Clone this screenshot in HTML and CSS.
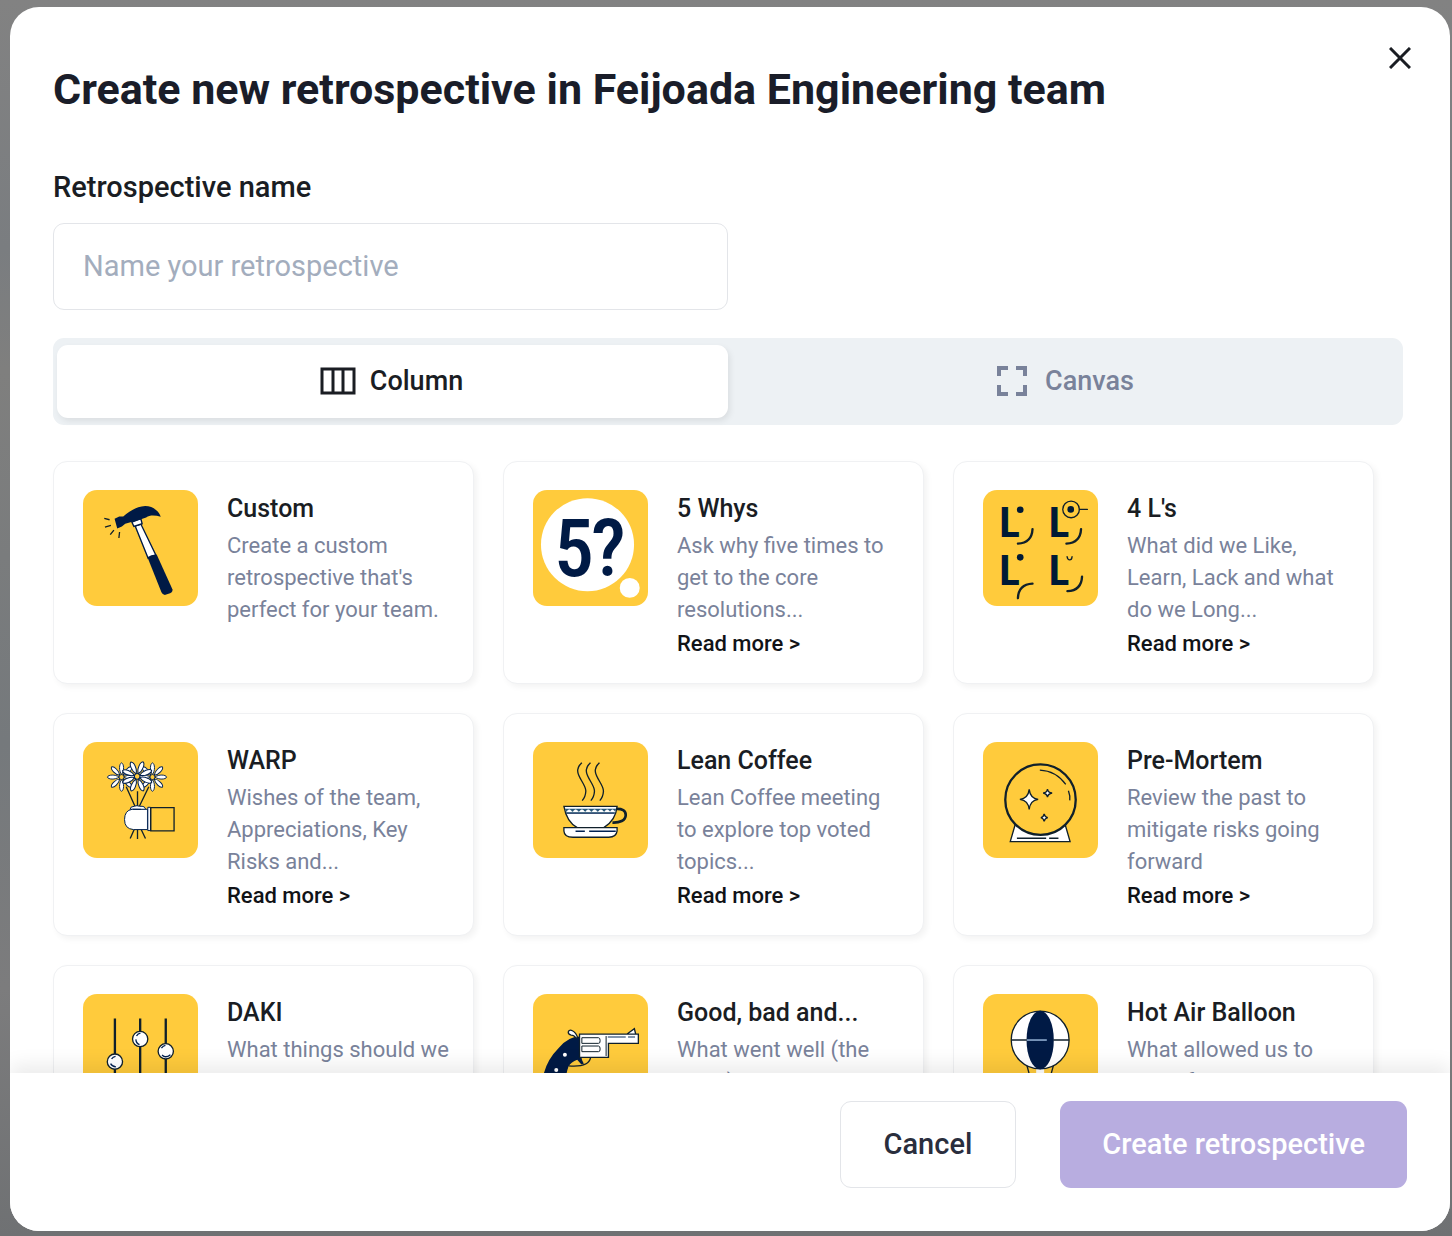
FILE: index.html
```html
<!DOCTYPE html>
<html lang="en">
<head>
  <meta charset="UTF-8">
  <meta name="viewport" content="width=device-width, initial-scale=1.0">
  <title>Create new retrospective</title>
  <link rel="stylesheet" href="styles.css">
</head>
<body>
  <div class="modal" role="dialog" aria-labelledby="modalTitle">
    <button class="close-btn" type="button" aria-label="Close">
      <svg width="22" height="22" viewBox="0 0 22 22"><path d="M1 1l20 20M21 1L1 21" fill="none" stroke="currentColor" stroke-width="3"/></svg>
    </button>

    <div class="modal-body">
      <h1 id="modalTitle">Create new retrospective in Feijoada Engineering team</h1>

      <div class="form-group">
        <label for="retroName">Retrospective name</label>
        <input type="text" id="retroName" placeholder="Name your retrospective">
      </div>

      <div class="tabs">
        <button type="button" class="tab active">
          <svg width="36" height="28" viewBox="0 0 36 28" fill="none" stroke="currentColor" stroke-width="3"><rect x="2" y="2" width="32" height="24"/><path d="M13 2v24M23 2v24"/></svg>
          Column
        </button>
        <button type="button" class="tab">
          <svg width="36" height="30" viewBox="0 0 36 30" fill="none" stroke="currentColor" stroke-width="4"><path d="M4 10V2h9M21 2h9v8M30 19v9h-9M13 28H4v-9"/></svg>
          Canvas
        </button>
      </div>

      <div class="templates">
        <article class="card">
          <svg class="thumb" viewBox="24 24 346 348">
            <path d="M181 132L198 126 243 219 220 229z" fill="#fff" stroke="#001a45" stroke-width="4"/>
            <path d="M171 120l27-10 4 15-25 8z" fill="#fff" stroke="#001a45" stroke-width="4"/>
            <path d="M119 110l14-7 12 0c18-14 38-30 66-31 24 0 42 16 47 32-16-4-32-6-44 2-20 8-42 13-63 19l-10 8-14 6z" fill="#001a45"/>
            <path d="M218 226q12-9 28-8l47 104q2 8-7 12l-14 5q-8 1-12-8z" fill="#001a45"/>
            <path d="M88 109l16 4M90 135l18-5M106 158l11-14M132 168l2-18" fill="none" stroke="#10202b" stroke-width="4"/>
          </svg>
          <div class="card-text">
            <h3>Custom</h3>
            <p>Create a custom retrospective that's perfect for your team.</p>
          </div>
        </article>

        <article class="card">
          <svg class="thumb" viewBox="24 24 346 348">
            <circle cx="188" cy="188" r="140" fill="#fff"/>
            <circle cx="315" cy="318" r="30" fill="#fff"/>
            <g class="thumb-num">
              <text x="147" y="283">5</text>
              <text x="251" y="283">?</text>
            </g>
          </svg>
          <div class="card-text">
            <h3>5 Whys</h3>
            <p>Ask why five times to get to the core resolutions...</p>
            <a href="#">Read more &gt;</a>
          </div>
        </article>

        <article class="card">
          <svg class="thumb" viewBox="24 24 346 348">
            <g class="thumb-letters">
              <text x="73" y="165">L</text>
              <text x="222" y="165">L</text>
              <text x="73" y="308">L</text>
              <text x="222" y="308">L</text>
            </g>
            <g fill="#001a35">
              <circle cx="136" cy="83" r="10"/>
              <circle cx="288" cy="82" r="10"/>
              <circle cx="136" cy="226" r="10"/>
            </g>
            <g fill="none" stroke="#10202b" stroke-width="7" stroke-linecap="round">
              <path d="M173 141q-2 42-44 44M319 141q-2 42-44 44M322 284q-2 42-44 44M173 305q-42 2-44 44"/>
              <path d="M277 224c2 13 14 13 15 0" stroke-width="4"/>
              <path d="M314 82h24" stroke-width="4"/>
              <circle cx="289" cy="82" r="25" stroke-width="4"/>
            </g>
          </svg>
          <div class="card-text">
            <h3>4 L's</h3>
            <p>What did we Like, Learn, Lack and what do we Long...</p>
            <a href="#">Read more &gt;</a>
          </div>
        </article>

        <article class="card">
          <svg class="thumb" viewBox="24 24 346 348">
            <defs>
              <path id="petal" d="M0-8C-9-20-8-42 0-45 8-42 9-20 0-8z"/>
              <g id="flower">
                <use href="#petal"/><use href="#petal" transform="rotate(45)"/><use href="#petal" transform="rotate(90)"/>
                <use href="#petal" transform="rotate(135)"/><use href="#petal" transform="rotate(180)"/><use href="#petal" transform="rotate(225)"/>
                <use href="#petal" transform="rotate(270)"/><use href="#petal" transform="rotate(315)"/>
                <circle r="8" fill="#ffcb3c"/>
              </g>
            </defs>
            <path d="M154 158l26 58M188 172v46M222 158l-28 58M178 287l-12 27M188 287v28M199 287l13 27" fill="none" stroke="#10202b" stroke-width="4"/>
            <g fill="#fff" stroke="#002050" stroke-width="3">
              <use href="#flower" transform="translate(140 129) scale(.95)"/>
              <use href="#flower" transform="translate(233 129) scale(.95)"/>
              <use href="#flower" transform="translate(187 127) rotate(22) scale(1.05)"/>
              <path d="M166 226q0-9 12-9 9-4 16 0 18-2 18 10z"/>
              <path d="M172 226h46v61h-42q-27-2-27-30 0-28 23-31z"/>
              <path d="M174 226h24" fill="none"/>
              <path d="M219 220h8v70h-8z"/>
            </g>
            <path d="M228 221h70v70h-70z" fill="none" stroke="#10202b" stroke-width="4"/>
          </svg>
          <div class="card-text">
            <h3>WARP</h3>
            <p>Wishes of the team, Appreciations, Key Risks and...</p>
            <a href="#">Read more &gt;</a>
          </div>
        </article>

        <article class="card">
          <svg class="thumb" viewBox="24 24 346 348">
            <g fill="none" stroke="#10202b" stroke-width="4">
              <path d="M171 86c-34 30 12 58 12 85q-1 18-11 29M197 86c-34 30 12 58 12 85q-1 18-11 29M224 86c-34 30 12 58 12 85q-1 18-11 29"/>
              <path d="M272 225q31-2 31 18c0 17-19 24-40 23" stroke-width="8"/>
            </g>
            <path d="M117 217h160q-4 42-40 64h-80q-32-18-40-64z" fill="#fff" stroke="#10202b" stroke-width="4"/>
            <path d="M120 224h154l-4 12H124z" fill="#285778"/>
            <path d="M125 234q8-13 17 0M144 234q8-13 17 0M163 234q8-13 17 0M182 234q8-13 17 0M201 234q8-13 17 0M220 234q8-13 17 0M239 234q8-13 17 0M256 234q7-13 15 0" fill="#fff" stroke="#fff" stroke-width="2"/>
            <path d="M124 238h146" fill="none" stroke="#002050" stroke-width="3"/>
            <path d="M117 281h160v10q-2 19-25 19H144q-26 0-27-19z" fill="#fff" stroke="#10202b" stroke-width="4"/>
            <path d="M152 292h28M193 292h80" stroke="#002050" stroke-width="4"/>
          </svg>
          <div class="card-text">
            <h3>Lean Coffee</h3>
            <p>Lean Coffee meeting to explore top voted topics...</p>
            <a href="#">Read more &gt;</a>
          </div>
        </article>

        <article class="card">
          <svg class="thumb" viewBox="24 24 346 348">
            <path d="M122 268h148l16 55H106z" fill="#fff" stroke="#10202b" stroke-width="4"/>
            <circle cx="197" cy="197" r="106" fill="#ffcb3c" stroke="#10202b" stroke-width="7"/>
            <path d="M195 108q48 2 78 43M281 170q6 16 4 29M126 313h88M223 313h28" fill="none" stroke="#10202b" stroke-width="4"/>
            <g fill="#fff" stroke="#10202b" stroke-width="4">
              <path d="M163 166q3 27 27 30-24 3-27 30-3-27-28-30 25-3 28-30z"/>
              <path d="M218 165q2 11 14 12-12 2-14 12-2-10-13-12 11-1 13-12z"/>
              <path d="M208 240q2 10 11 11-9 2-11 11-2-9-10-11 8-1 10-11z"/>
            </g>
          </svg>
          <div class="card-text">
            <h3>Pre-Mortem</h3>
            <p>Review the past to mitigate risks going forward</p>
            <a href="#">Read more &gt;</a>
          </div>
        </article>

        <article class="card">
          <svg class="thumb" viewBox="249 102 346 348">
            <path d="M345 175v220M421 175v220M498 175v220" stroke="#10202b" stroke-width="7"/>
            <g fill="#fff" stroke="#10202b" stroke-width="4">
              <circle cx="345" cy="305" r="23"/>
              <circle cx="421" cy="237" r="23"/>
              <circle cx="498" cy="274" r="23"/>
            </g>
            <path d="M332 311q5 9 16 10M335 297q4-7 12-8M408 238q1 12 11 16M410 228q4-8 12-9M485 264q5-7 12-8M487 285q10 11 25-1" fill="none" stroke="#002050" stroke-width="4"/>
          </svg>
          <div class="card-text">
            <h3>DAKI</h3>
            <p>What things should we Drop, Add, Keep and Improve?</p>
            <a href="#">Read more &gt;</a>
          </div>
        </article>

        <article class="card">
          <svg class="thumb" viewBox="99 102 346 348">
            <path d="M206 318c38 3 62-2 66-24" fill="none" stroke="#10202b" stroke-width="4"/>
            <path d="M239 229q-34 0-62 34-34 34-45 76v80h64q-4-60 10-100 8-14 26-20l12 14 8-2q-8-12-7-20z" fill="#001a45"/>
            <path d="M233 232c-6-20-26-28-28-16q0 8 9 9 10 0 14 10z" fill="#fff" stroke="#10202b" stroke-width="4"/>
            <path d="M382 222l22-16 4 16zM239 222h177v28h-90v42h-87z" fill="#fff" stroke="#10202b" stroke-width="4"/>
            <path d="M246 233h50q5 0 5 9t-5 8h-50zM246 258h50q5 0 5 9t-5 8h-50zM319 228v60" fill="none" stroke="#10202b" stroke-width="3"/>
            <path d="M324 231h54M385 231h21" stroke="#5b7390" stroke-width="5"/>
            <circle cx="195" cy="284" r="6" fill="#fff"/>
            <circle cx="169" cy="330" r="6" fill="#fff"/>
          </svg>
          <div class="card-text">
            <h3>Good, bad and...</h3>
            <p>What went well (the good), what didn't go so...</p>
            <a href="#">Read more &gt;</a>
          </div>
        </article>

        <article class="card">
          <svg class="thumb" viewBox="99 102 346 348">
            <path d="M230 312l16 60M312 312l-16 60" stroke="#10202b" stroke-width="4"/>
            <path d="M259 320h24v60h-24z" fill="#fff"/>
            <circle cx="271" cy="240" r="87" fill="#fff" stroke="#10202b" stroke-width="4"/>
            <ellipse cx="271" cy="240" rx="41" ry="88" fill="#001a45"/>
            <path d="M184 240h47M311 240h47" stroke="#10202b" stroke-width="4"/>
            <path d="M231 240h60" stroke="#a9c9ea" stroke-width="4"/>
          </svg>
          <div class="card-text">
            <h3>Hot Air Balloon</h3>
            <p>What allowed us to move forward, what held us...</p>
            <a href="#">Read more &gt;</a>
          </div>
        </article>
      </div>
    </div>

    <footer class="modal-footer">
      <button type="button" class="btn">Cancel</button>
      <button type="button" class="btn btn-primary" disabled>Create retrospective</button>
    </footer>
  </div>
</body>
</html>
```
FILE: styles.css
```css
* {
  box-sizing: border-box;
}

body {
  margin: 0;
  height: 100vh;
  padding: 7px 2px 5px 10px;
  font-family: Roboto, "Liberation Sans", sans-serif;
  color: #1a1d23;
  background: linear-gradient(#828282, #7a7d80 20%, #7f7f7e 30%, #75797c 60%, #7c7c7d 80%, #6f7173);
}

h1, h3, p {
  margin: 0;
}

button, input {
  font-family: inherit;
}

.modal {
  position: relative;
  display: flex;
  flex-direction: column;
  height: 100%;
  background: #fff;
  border-radius: 29px;
  overflow: hidden;
}

.close-btn {
  position: absolute;
  top: 29px;
  right: 29px;
  display: flex;
  align-items: center;
  justify-content: center;
  width: 43px;
  height: 43px;
  padding: 0;
  border: none;
  background: none;
  color: #1a1d23;
  cursor: pointer;
}

.modal-body {
  flex: 1;
  min-height: 0;
  padding: 56px 47px 0 43px;
  overflow-y: auto;
  scrollbar-width: none;
}

h1 {
  font-size: 43px;
  line-height: 52px;
  font-weight: 700;
  color: #1a1d29;
}

.form-group {
  margin-top: 55px;
}

.form-group label {
  display: block;
  margin-bottom: 19px;
  font-size: 29px;
  line-height: 34px;
  font-weight: 500;
}

.form-group input {
  display: block;
  width: 50%;
  height: 87px;
  padding: 0 29px 2px;
  border: 1px solid #e3e5e9;
  border-radius: 11px;
  font-size: 29px;
  color: #1a1d23;
}

.form-group input::placeholder {
  color: #a3adbd;
}

.tabs {
  display: grid;
  grid-template-columns: 1fr 1fr;
  margin-top: 28px;
  padding: 7px 0;
  background: #edf1f4;
  border-radius: 11px;
}

.tab {
  display: flex;
  align-items: center;
  justify-content: center;
  gap: 14px;
  height: 73px;
  padding: 0 2px 2px 0;
  border: none;
  border-radius: 11px;
  background: none;
  font-size: 27px;
  font-weight: 500;
  color: #79829a;
  cursor: pointer;
}

.tab.active {
  margin-left: 4px;
  background: #fff;
  color: #1a1d23;
  box-shadow: 2px 3px 6px rgba(0, 0, 0, 0.08);
}

.templates {
  display: grid;
  grid-template-columns: repeat(3, 1fr);
  gap: 29px;
  margin-top: 36px;
  padding-right: 29px;
}

.card {
  display: flex;
  align-items: flex-start;
  gap: 29px;
  padding: 28px 24px 25px 29px;
  border: 1px solid #f0f1f3;
  border-radius: 14px;
  background: #fff;
  box-shadow: 3px 3px 6px rgba(0, 0, 0, 0.05);
}

.thumb {
  flex: none;
  width: 115px;
  height: 116px;
  border-radius: 14px;
  background: #ffcb3c;
}

.thumb-num {
  font: 500 240px "Roboto Condensed", "Liberation Sans Narrow", "Liberation Sans", sans-serif;
  text-anchor: middle;
  fill: #001a45;
}

.thumb-letters {
  font: 700 130px "Roboto Condensed", "Liberation Sans Narrow", Roboto, sans-serif;
  fill: #001a35;
}

.card h3 {
  font-size: 25px;
  line-height: 38px;
  font-weight: 500;
  white-space: nowrap;
}

.card p {
  margin-top: 2px;
  font-size: 22px;
  line-height: 32px;
  color: #79829a;
}

.card a {
  display: block;
  margin-top: 4px;
  font-size: 22px;
  line-height: 28px;
  font-weight: 500;
  color: #111317;
  text-decoration: none;
}

.modal-footer {
  position: relative;
  display: flex;
  justify-content: flex-end;
  gap: 44px;
  padding: 28px 43px 43px;
  background: #fff;
  box-shadow: 0 -8px 18px rgba(0, 0, 0, 0.08);
}

.btn {
  height: 87px;
  padding: 0 43px 2px;
  border: 1px solid #e3e5e9;
  border-radius: 11px;
  background: #fff;
  font-size: 29px;
  font-weight: 500;
  color: #2a2e3d;
  cursor: pointer;
}

.btn-primary {
  padding: 0 42px 2px;
  border: none;
  background: #b8ade0;
  color: #fff;
  cursor: default;
}
```
